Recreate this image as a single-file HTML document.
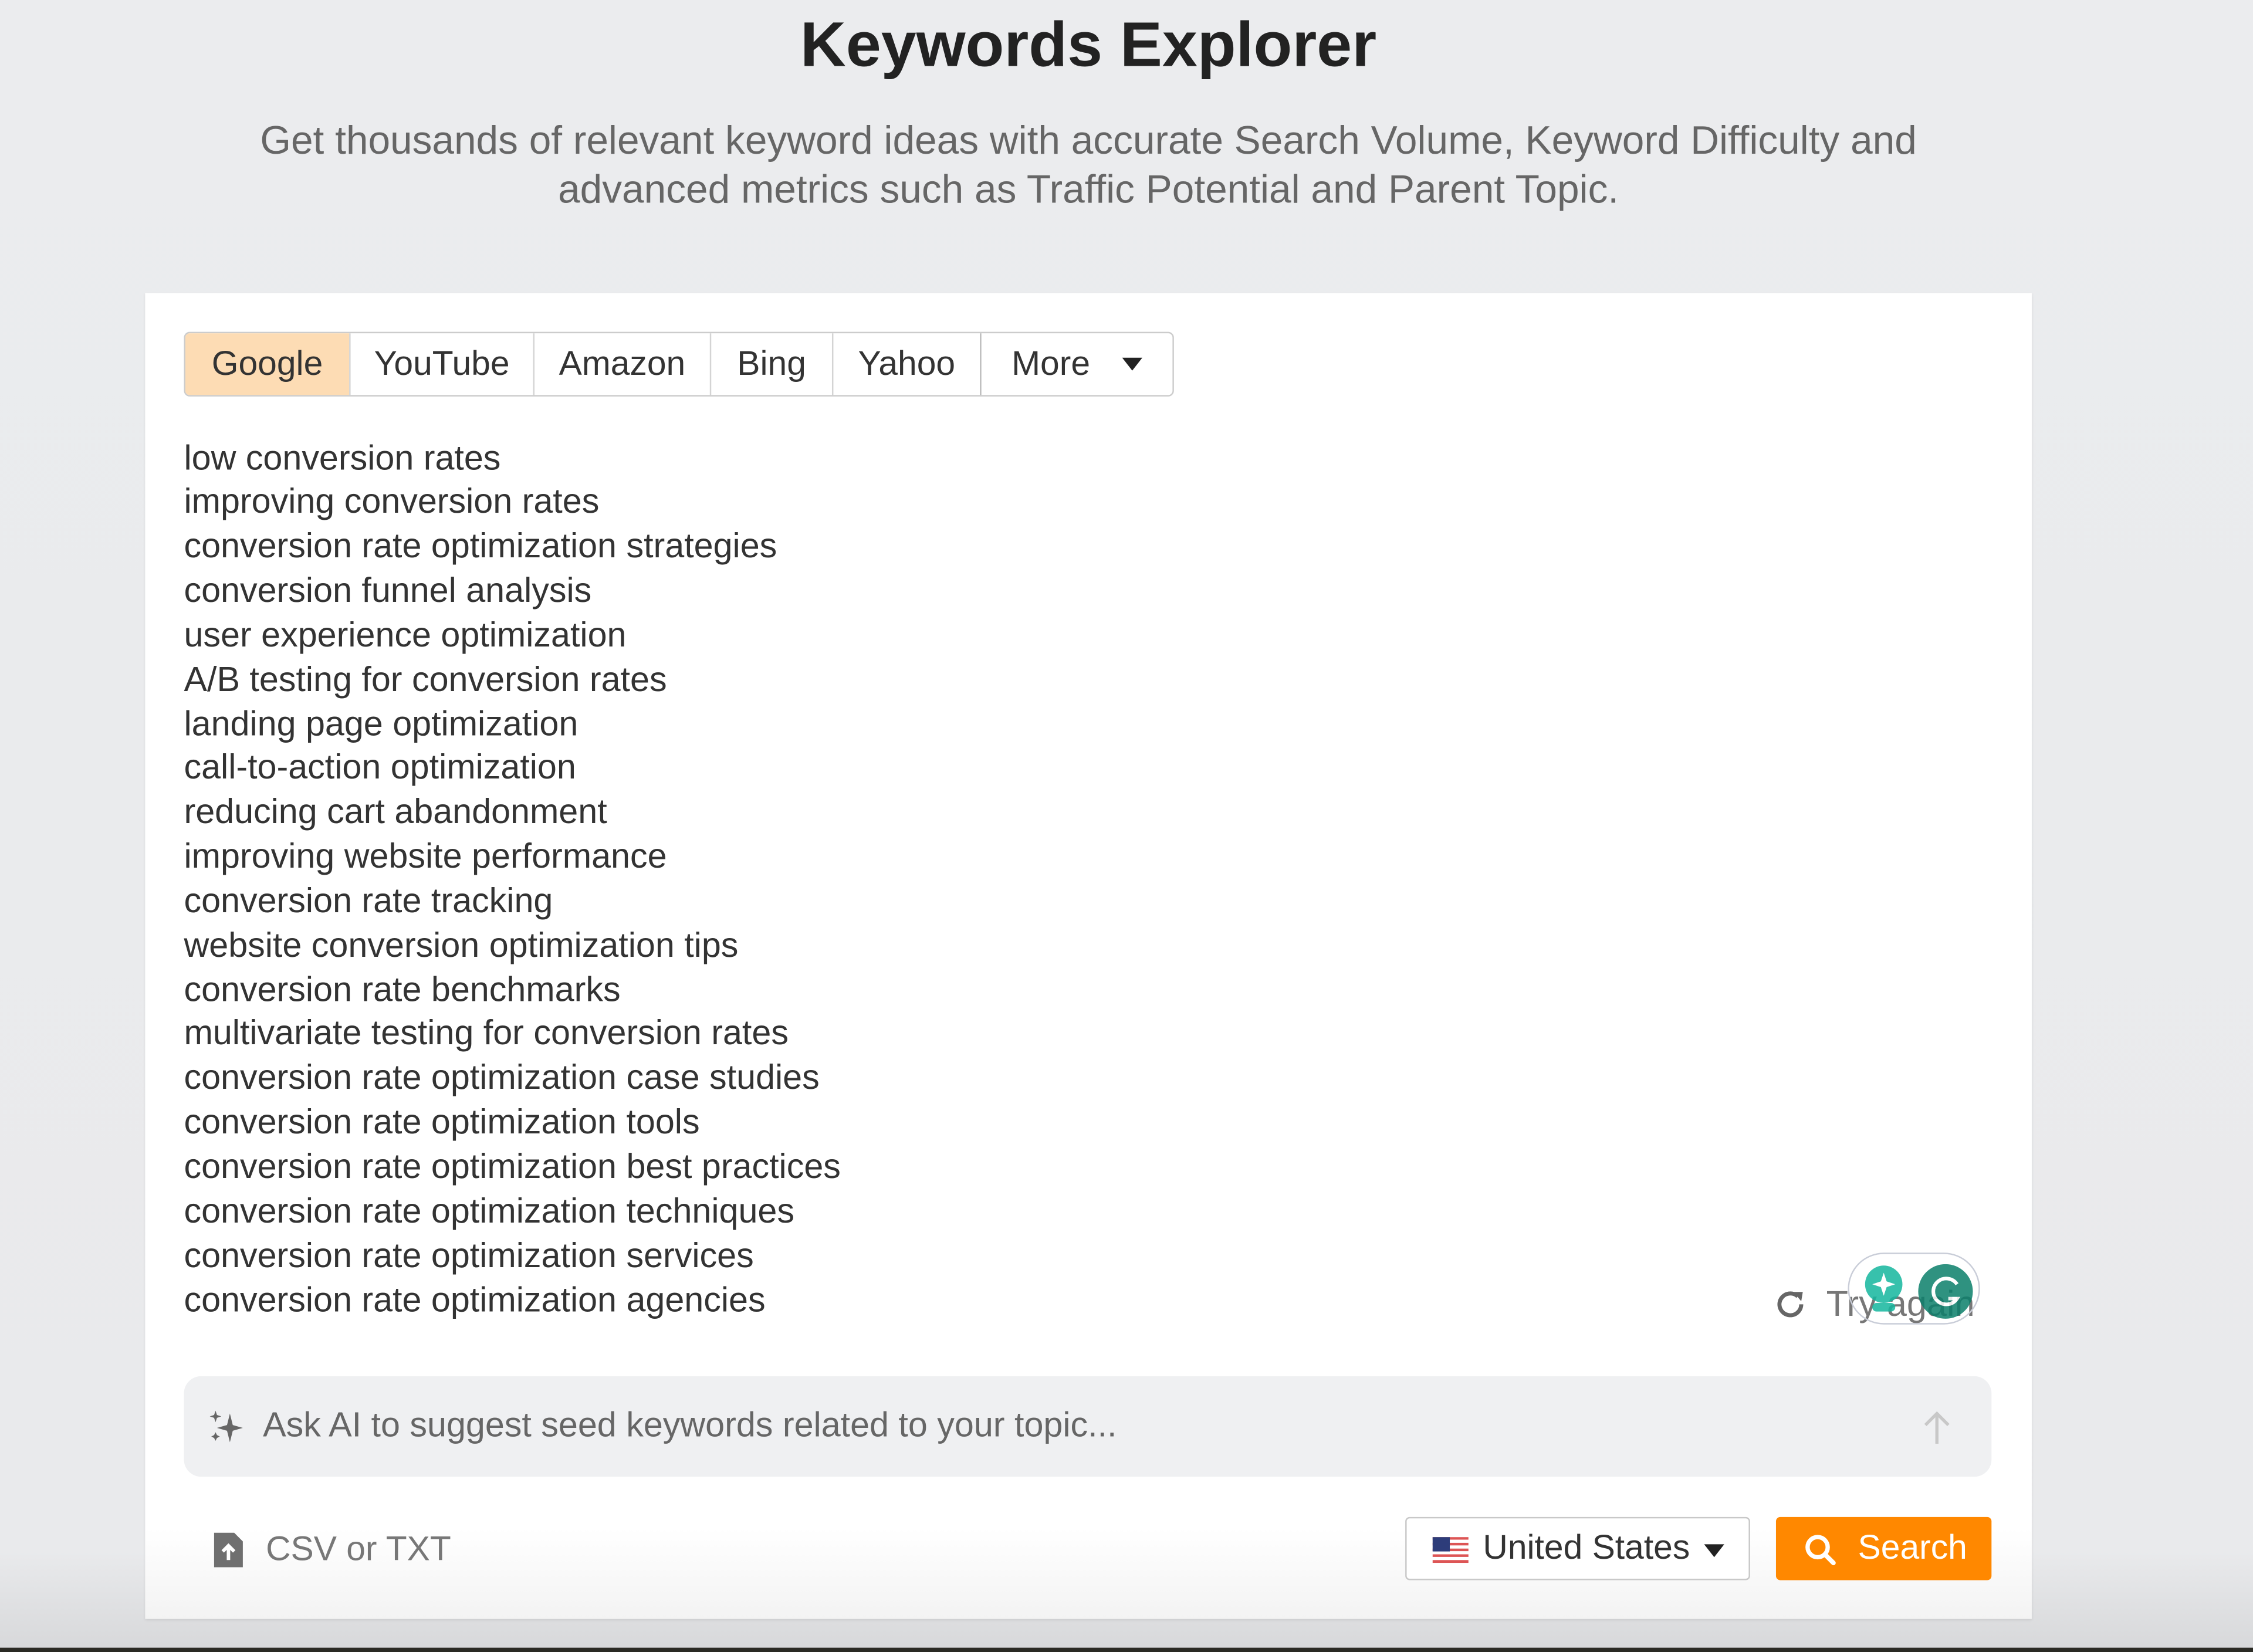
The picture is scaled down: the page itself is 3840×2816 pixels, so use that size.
<!DOCTYPE html>
<html><head><meta charset="utf-8"><style>
html,body{margin:0;padding:0;}
body{width:3840px;height:2816px;overflow:hidden;background:#e9eaec;font-family:"Liberation Sans",Arial,sans-serif;}
#s{position:absolute;left:0;top:0;width:1568px;height:1150px;transform:scale(2.449,2.4487);transform-origin:0 0;background:linear-gradient(#ebecee 0,#e9eaec 1080px,#d8d9db 1145px);}
.a{position:absolute;white-space:nowrap;}
.title{left:0;width:1515px;text-align:center;top:6px;font-size:44px;font-weight:bold;color:#222;line-height:52px;}
.sub{left:0;width:1515px;text-align:center;font-size:27.6px;color:#666;line-height:34px;}
.card{left:101px;top:204px;width:1313px;height:923px;background:linear-gradient(#fff 0,#fff 860px,#f3f3f3 923px);box-shadow:0 1px 2px rgba(0,0,0,.08);}
.tabs{left:128px;top:231px;height:43px;display:flex;border:1px solid #ccc;border-radius:4px;overflow:hidden;background:#fff;}
.tab{height:43px;line-height:43px;font-size:24px;color:#333;text-align:center;border-left:1px solid #d4d4d4;box-sizing:border-box;}
.tab:first-child{border-left:none;background:#fddcb4;}
.list{left:128px;top:304.5px;font-size:24.2px;line-height:30.85px;color:#333;}
.ai{left:128px;top:958px;width:1258px;height:70px;background:#eff0f2;border-radius:12px;}
.btn{left:1236px;top:1056px;width:150px;height:44px;background:#ff8800;border-radius:3px;color:#fff;font-size:24px;line-height:44px;}
.sel{left:978px;top:1056px;width:240px;height:44px;box-sizing:border-box;border:1px solid #c8c8c8;border-radius:3px;background:#fff;font-size:24px;line-height:42px;color:#333;}
.tri{display:inline-block;width:0;height:0;border-left:7px solid transparent;border-right:7px solid transparent;border-top:9px solid #222;}
</style></head><body><div id="s">
<div class="a title">Keywords Explorer</div>
<div class="a sub" style="top:81px">Get thousands of relevant keyword ideas with accurate Search Volume, Keyword Difficulty and</div>
<div class="a sub" style="top:115px">advanced metrics such as Traffic Potential and Parent Topic.</div>
<div class="a card"></div>
<div class="a tabs">
<div class="tab" style="width:114px">Google</div>
<div class="tab" style="width:128px">YouTube</div>
<div class="tab" style="width:123px">Amazon</div>
<div class="tab" style="width:85px">Bing</div>
<div class="tab" style="width:103px">Yahoo</div>
<div class="tab" style="width:134px;border-left-color:#bbb;text-align:left;padding-left:21px">More <span class="tri" style="margin-left:16px;position:relative;top:-3px"></span></div>
</div>
<div class="a list">low conversion rates<br>improving conversion rates<br>conversion rate optimization strategies<br>conversion funnel analysis<br>user experience optimization<br>A/B testing for conversion rates<br>landing page optimization<br>call-to-action optimization<br>reducing cart abandonment<br>improving website performance<br>conversion rate tracking<br>website conversion optimization tips<br>conversion rate benchmarks<br>multivariate testing for conversion rates<br>conversion rate optimization case studies<br>conversion rate optimization tools<br>conversion rate optimization best practices<br>conversion rate optimization techniques<br>conversion rate optimization services<br>conversion rate optimization agencies</div>
<svg class="a" style="left:1233px;top:895px" width="26" height="26" viewBox="0 0 24 24"><path d="M19 12a7 7 0 1 1-2.2-5.1" fill="none" stroke="#666" stroke-width="2.6"/><path d="M14 4l6 0-1 6z" fill="#666"/></svg>
<div class="a" style="left:1271px;top:893px;font-size:25px;color:#777;line-height:30px">Try again</div>
<div class="a" style="left:1286px;top:872px;width:90px;height:48px;border:1.5px solid #c9cdd8;border-radius:25px;"></div>
<svg class="a" style="left:1296px;top:880px;opacity:.85" width="80" height="40" viewBox="0 0 80 40"><circle cx="15" cy="14" r="13" fill="#15b79e"/><rect x="7" y="27" width="16" height="6" rx="3" fill="#15b79e"/><path d="M15 6l2 6 6 2-6 2-2 6-2-6-6-2 6-2z" fill="#fff"/><circle cx="58" cy="19" r="19" fill="#0b7f6b"/><path d="M66 14a9 9 0 1 0 0 10h-6" fill="none" stroke="#fff" stroke-width="2.5"/></svg>
<div class="a ai"></div>
<svg class="a" style="left:144px;top:980px" width="28" height="28" viewBox="0 0 28 28"><path d="M16 4l2 8 7 2-7 2-2 8-2-8-7-2 7-2z" fill="#666"/><path d="M6 2l1 3 3 1-3 1-1 3-1-3-3-1 3-1zM6 17l1 2 2 1-2 1-1 2-1-2-2-1 2-1z" fill="#666"/></svg>
<div class="a" style="left:183px;top:978px;font-size:24.2px;color:#666;line-height:30px">Ask AI to suggest seed keywords related to your topic...</div>
<svg class="a" style="left:1337px;top:981px" width="22" height="26" viewBox="0 0 22 26"><path d="M11 24V3M3 11l8-8 8 8" fill="none" stroke="#c8c8c8" stroke-width="2.2"/></svg>
<svg class="a" style="left:148px;top:1066px" width="22" height="26" viewBox="0 0 22 26"><path d="M1 1h14l6 6v18H1z" fill="#6f6f6f"/><path d="M11 20v-9M7 14l4-4 4 4" fill="none" stroke="#fff" stroke-width="2.4"/></svg>
<div class="a" style="left:185px;top:1064px;font-size:24px;color:#777;line-height:30px">CSV or TXT</div>
<div class="a sel"><svg style="position:absolute;left:18px;top:13px" width="25" height="18" viewBox="0 0 25 18"><rect width="25" height="18" fill="#fff"/><g fill="#d55"><rect y="0" width="25" height="1.8"/><rect y="4" width="25" height="1.8"/><rect y="8" width="25" height="1.8"/><rect y="12" width="25" height="1.8"/><rect y="16" width="25" height="2"/></g><rect width="12" height="10" fill="#2d3c7a"/></svg><span style="position:absolute;left:53px">United States</span><span class="tri" style="position:absolute;left:207px;top:18px"></span></div>
<div class="a btn"><svg style="position:absolute;left:19px;top:11px" width="24" height="24" viewBox="0 0 24 24"><circle cx="10" cy="10" r="7" fill="none" stroke="#fff" stroke-width="3"/><path d="M15 15l6 6" stroke="#fff" stroke-width="3.2" stroke-linecap="round"/></svg><span style="position:absolute;left:57px">Search</span></div>
<div class="a" style="left:0;top:1147px;width:1568px;height:3px;background:#2a2a24"></div>
</div></body></html>
